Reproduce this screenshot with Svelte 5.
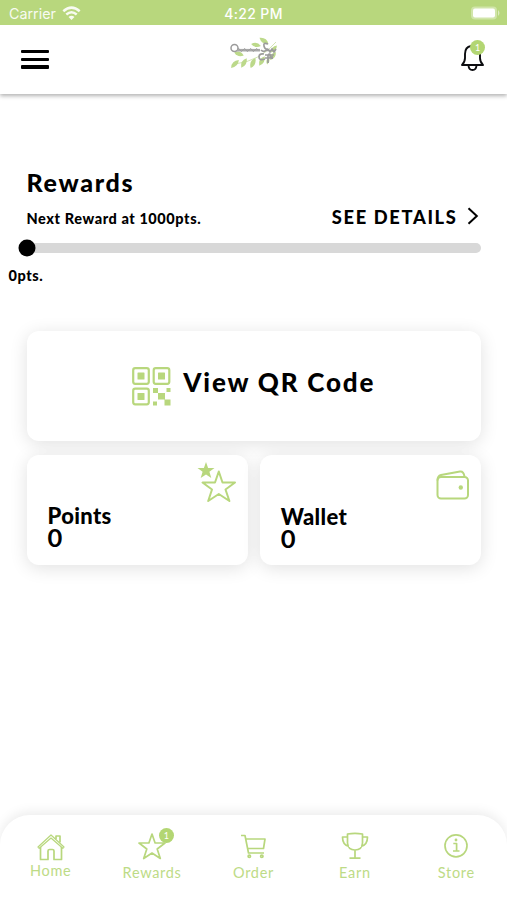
<script>
  const tabs = ['Home', 'Rewards', 'Order', 'Earn', 'Store'];
  const leaves = [
    [34, 5, 35, 1.1], [44, 13, -50, 0.9], [26, 9, 12, 1], [9, 18, 18, 1], [5, 28, -45, 1.1],
    [14, 27, -60, 1.1], [23, 27, -65, 1.1], [32, 25, -60, 1.1], [43, 20, -55, 1], [38, 25, -75, 0.7]
  ];
</script>

<div class="screen">
  <div class="status">
    <div class="carrier"><span>Carrier</span>
      <svg width="19" height="15" viewBox="0 0 19 15" fill="none" stroke="#fff" stroke-width="2.5">
        <path d="M1.3 5.2Q9.5 -2 17.7 5.2M4.3 8.5Q9.5 4 14.7 8.5" />
        <path d="M6.5 11Q9.5 8.5 12.5 11L9.5 14Z" fill="#fff" stroke="none" />
      </svg>
    </div>
    <span class="time">4:22 PM</span>
    <svg class="battery" width="32" height="16" viewBox="0 0 32 16">
      <rect x="1" y="1.5" width="26" height="13" rx="4" fill="#fff" opacity=".35" />
      <rect x="3" y="3.5" width="22" height="9" rx="2" fill="#fff" />
      <path d="M28 5Q31 8 28 11Z" fill="#fff" opacity=".5" />
    </svg>
  </div>

  <header>
    <div class="burger"><i></i><i></i><i></i></div>
    <svg class="logo" width="48" height="36" viewBox="0 0 48 36" fill="none">
      <path d="M5 28Q30 25 46 6" stroke="#c8dda0" stroke-width=".8" />
      {#each leaves as [x, y, a, s]}
        <path transform="translate({x} {y}) rotate({a}) scale({s})" d="M-5 0Q0 -4.4 5 0Q0 4 -5 0Z" fill="#bcd98a" />
      {/each}
      <g stroke="#9b9b9b">
        <circle cx="4.5" cy="12" r="3.5" stroke-width="1.5" />
        <path d="M7 14.2H30" stroke-width="2.6" stroke="#a9a9a9" />
        <path d="M7 13.5Q9 11 10 14T13 14T16 14T19 14T22 14T25 14T28 14" stroke-width=".9" />
        <path d="M38 8Q33 6 34 10T38 13Q34 17 31 14M37 14.5H46M38 13L40 16L42 13L44 16L46 13" stroke-width="1.7" />
        <path d="M34 18Q29 17 29 21T35 23M35 22H43M38 27V19Q41 16 40 22M42 20V23M35 19H44" stroke-width="1.7" />
      </g>
    </svg>
    <div class="bell">
      <svg width="28" height="32" viewBox="0 0 28 32" fill="none" stroke="#0c0d10" stroke-width="1.9">
        <path d="M3 26Q6 23 6 19V15Q6 8 12 7Q20 7 21 15V19Q21 23 24 26Z" stroke-linejoin="round" />
        <path d="M9.5 26.5Q9.8 31 13.5 31T17.5 26.5" />
      </svg>
      <b class="dot">1</b>
    </div>
  </header>

  <main>
    <h1>Rewards</h1>
    <div class="progress-head">
      <span class="next">Next Reward at 1000pts.</span>
      <span class="details">SEE DETAILS</span>
      <svg width="12" height="18" viewBox="0 0 12 18" fill="none" stroke="#000" stroke-width="2"><path d="M1.5 1.3L9.8 9L1.5 16.7" /></svg>
    </div>
    <div class="track"><i></i></div>
    <div class="zero">0pts.</div>

    <section class="card qr">
      <svg width="39" height="39" viewBox="0 0 39 39" fill="#b8d77d">
        {#each [[0, 0], [20.5, 0], [0, 20.5]] as [x, y]}
          <rect x={x + 1.2} y={y + 1.2} width="15.6" height="15.6" rx="2" fill="none" stroke="#b8d77d" stroke-width="2.2" />
          <rect x={x + 5.5} y={y + 5.5} width="7" height="7" rx=".6" />
        {/each}
        <path d="M21 21h5v5h-5zM34.5 21h4v4h-4zM26 26h7v6.5h-7zM21 34.5h4v4h-4zM32.5 32.5h6v6h-6z" />
      </svg>
      <span>View QR Code</span>
    </section>
    <div class="pair">
      <section class="card stat">
        <svg width="40" height="42" viewBox="0 0 40 42" stroke="#b8d77d" fill="none" stroke-width="2" stroke-linejoin="round">
          <path d="M9 0L11.1 6H17.5L12.4 9.8L14.3 16L9 12.4L3.7 16L5.6 9.8L.5 6H6.9Z" fill="#b8d77d" stroke="none" />
          <path d="M21.8 9.5L25.5 20.5H38L28.5 27.5L32.4 39L21.8 32L11.2 39L15 27.5L5.5 20.5H18Z" />
        </svg>
        <h2>Points</h2><strong>0</strong>
      </section>
      <section class="card stat wallet">
        <svg width="34" height="30" viewBox="0 0 34 30" stroke="#b8d77d" fill="none" stroke-width="2">
          <rect x="1.5" y="7" width="30.5" height="21.5" rx="3.5" />
          <path d="M1.5 10.5Q1.5 6 5 5L24 1.5Q27.5 1 28.5 6.5" />
          <circle cx="24.8" cy="17.5" r="2.2" fill="#b8d77d" stroke="none" />
        </svg>
        <h2>Wallet</h2><strong>0</strong>
      </section>
    </div>
  </main>

  <nav>
    {#each tabs as tab, i}
      <div class="tab" class:home={i === 0}>
        <div class="glyph">
          <svg width="30" height="30" viewBox="0 0 30 30" fill="none" stroke="#b8d77d" stroke-width="1.7" stroke-linejoin="round">
            {#if i === 0}
              <path d="M2 16L15 4L28 16L26.8 17.3L15 7L3.2 17.3Z" stroke-width="1.2" />
              <path d="M4.5 16V28.5H12V20Q12 18.5 13.5 18.5H16.5Q18 18.5 18 20V28.5H25.5V16M20 8V5H24V11.5" />
            {:else if i === 1}
              <path d="M15 3L18.1 12H28L20.2 18L23.3 27.5L15 22L6.7 27.5L9.8 18L2 12H11.9Z" />
            {:else if i === 2}
              <path d="M2 4.5H6L9.5 22H25M6.5 8H26L24.5 17.5H8.5" />
              <circle cx="10.3" cy="25.3" r="1.2" /><circle cx="22.8" cy="25.3" r="1.2" />
            {:else if i === 3}
              <path d="M7.5 3Q15 1.8 22.5 3V12Q22 19 15 19T7.5 12ZM7.5 6H2.5Q2.5 14 9 15.5M22.5 6H27.5Q27.5 14 21 15.5M15 19V27M9.5 27.2H20.5" />
            {:else}
              <circle cx="15" cy="14.8" r="11" />
              <path d="M12.3 12.5H15.6V20M12 20H18.5" /><circle cx="15" cy="9" r="1.4" fill="#b8d77d" stroke="none" />
            {/if}
          </svg>
          {#if i === 1}<b class="dot">1</b>{/if}
        </div>
        <span>{tab}</span>
      </div>
    {/each}
  </nav>
</div>

<style>
  :global(body) { background: #fff; }
  * { box-sizing: border-box; }
  .screen { width: 507px; height: 900px; display: flex; flex-direction: column; overflow: hidden; background: #fff; font-family: Lato, sans-serif; color: #000; }
  .status { height: 25px; flex: none; display: grid; grid-template-columns: 1fr auto 1fr; align-items: center; background: #b8d77d; color: #fff; font: 14.5px/23px Inter, sans-serif; padding-top: 1px; }
  .carrier { display: flex; align-items: center; gap: 6px; padding-left: 9px; opacity: .9; }
  .carrier span { font-size: 14.3px; }
  .time { font-size: 14px; font-weight: 500; letter-spacing: .35px; }
  .battery { justify-self: end; margin: -1px 5px 0 0; }
  header { height: 69px; flex: none; display: flex; padding: 0 19px 0 21px; background: #fff; box-shadow: 0 2px 4px rgba(0,0,0,.3); clip-path: inset(0 0 -10px 0); }
  .burger { width: 28px; margin-top: 25px; display: flex; flex-direction: column; gap: 4.5px; }
  .burger i { height: 3.2px; background: #000; border-radius: 1px; }
  .logo { margin: 11px 0 0 181px; }
  .bell { position: relative; margin: 14px 1px 0 auto; width: 28px; height: 32px; }
  .dot { position: absolute; width: 15px; height: 15px; border-radius: 50%; background: #b3d673; color: #fff; font: 9px/15px Lato, sans-serif; text-align: center; }
  .bell .dot { right: 2px; top: 1px; }
  main { flex: 1; padding: 72px 26px 0 26.5px; }
  h1 { margin: 0; font-size: 25px; line-height: 32px; font-weight: 900; letter-spacing: 1.7px; }
  .progress-head { display: flex; align-items: center; height: 38px; padding-right: 2.5px; }
  .next { flex: 1; font-size: 14.5px; font-weight: 900; letter-spacing: .58px; margin-top: 2px; }
  .details { font-size: 18.3px; font-weight: 900; letter-spacing: 1.65px; margin-right: 9px; }
  .progress-head svg { margin-top: -2px; }
  .track { margin-top: 7px; height: 10px; border-radius: 5px; background: #d8d8d8; }
  .track i { display: block; width: 17px; height: 17px; border-radius: 50%; background: #000; transform: translate(-8.5px, -3.5px); }
  .zero { margin: 14px 0 0 -18px; font-size: 14.5px; line-height: 18px; font-weight: 900; letter-spacing: .6px; }
  .card { background: #fff; border-radius: 12px; box-shadow: 0 3px 18px rgba(0,0,0,.12); }
  .qr { height: 110px; margin-top: 46px; display: flex; justify-content: center; padding-top: 35.5px; gap: 12px; }
  .qr span { font-size: 26px; line-height: 31px; font-weight: 900; letter-spacing: 1.8px; }
  .pair { display: flex; gap: 12px; margin-top: 14px; }
  .stat { flex: 1; height: 110px; padding: 7px 11px 0 21px; display: flex; flex-direction: column; }
  .stat svg { align-self: flex-end; }
  h2 { margin: 0; font-size: 22px; line-height: 22px; font-weight: 900; letter-spacing: .35px; padding-top: 1px; }
  strong { font-size: 25.5px; line-height: 21px; font-weight: 700; }
  .wallet svg { margin: 8px 0 5px; }
  nav { height: 85px; flex: none; display: flex; background: #fff; border-radius: 30px 30px 0 0; box-shadow: 0 -3px 12px rgba(0,0,0,.08); padding-top: 16px; }
  .tab { flex: 1; display: flex; flex-direction: column; align-items: center; color: #bddb86; font-size: 14.5px; line-height: 18px; letter-spacing: .7px; }
  .tab > span { margin-top: 3px; }
  .home > span { margin-top: 1px; }
  .glyph { position: relative; width: 30px; height: 30px; }
  .glyph .dot { right: -7px; top: -3px; }
</style>
